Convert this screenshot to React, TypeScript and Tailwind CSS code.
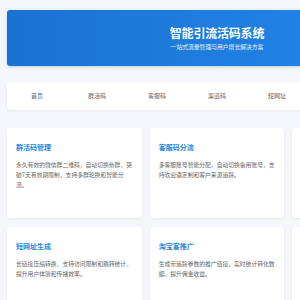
import React from 'react';

const navItems = ['首页', '群活码', '客服码', '渠道码', '短网址', '淘宝客', '数据统计'];

const features = [
  { title: '群活码管理', desc: '永久有效的微信群二维码，自动切换新群，突破7天有效期限制，支持多群轮换和智能分流。' },
  { title: '客服码分流', desc: '多客服账号智能分配，自动切换备用账号，支持欢迎语定制和客户来源追踪。' },
  { title: '渠道码追踪', desc: '为不同推广渠道生成专属二维码，精准统计各渠道引流效果。' },
  { title: '短网址生成', desc: '长链接压缩转换，支持访问限制和跳转统计，提升用户体验和传播效率。' },
  { title: '淘宝客推广', desc: '生成带追踪参数的推广链接，实时统计转化数据，提升佣金收益。' },
  { title: '数据统计分析', desc: '多维度数据报表，实时掌握扫码与转化情况。' },
];

const App: React.FC = () => {
  return (
    <div
      className="min-h-[300px] w-[434px] bg-[#f4f6fa] px-[7px] pt-[10px] pb-4"
      style={{ fontFamily: '"Noto Sans CJK SC", "Noto Sans", sans-serif' }}
    >
      {/* Header */}
      <header className="flex h-[56px] flex-col items-center justify-center rounded-[3px] bg-gradient-to-r from-[#1a72d3] to-[#2389ea] text-white shadow-[0_1px_3px_rgba(30,100,200,0.25)]">
        <h1 className="text-[12px] font-bold leading-[16px] tracking-[-0.2px]">智能引流活码系统</h1>
        <p className="mt-[2px] text-[5.8px] leading-[8px] text-white/90">一站式流量管理与用户增长解决方案</p>
      </header>

      {/* Nav */}
      <nav className="mt-[16px] flex h-[28px] items-center rounded-[4px] bg-white shadow-[0_1px_3px_rgba(0,0,0,0.06)]">
        {navItems.map((item) => (
          <span key={item} className="w-[60px] text-center text-[6px] leading-[8px] text-[#666]">
            {item}
          </span>
        ))}
      </nav>

      {/* Cards */}
      <div className="mt-[18px] grid grid-cols-3 gap-x-[8px] gap-y-[9px]">
        {features.map((f) => (
          <div key={f.title} className="h-[90px] rounded-[4px] bg-white px-[9px] pt-[14px] shadow-[0_1px_3px_rgba(0,0,0,0.05)]">
            <h3 className="text-[7px] font-bold leading-[10px] text-[#1e88e5]">{f.title}</h3>
            <p className="mt-[8px] text-[5.8px] leading-[10px] text-[#666]">{f.desc}</p>
          </div>
        ))}
      </div>
    </div>
  );
};

export default App;
